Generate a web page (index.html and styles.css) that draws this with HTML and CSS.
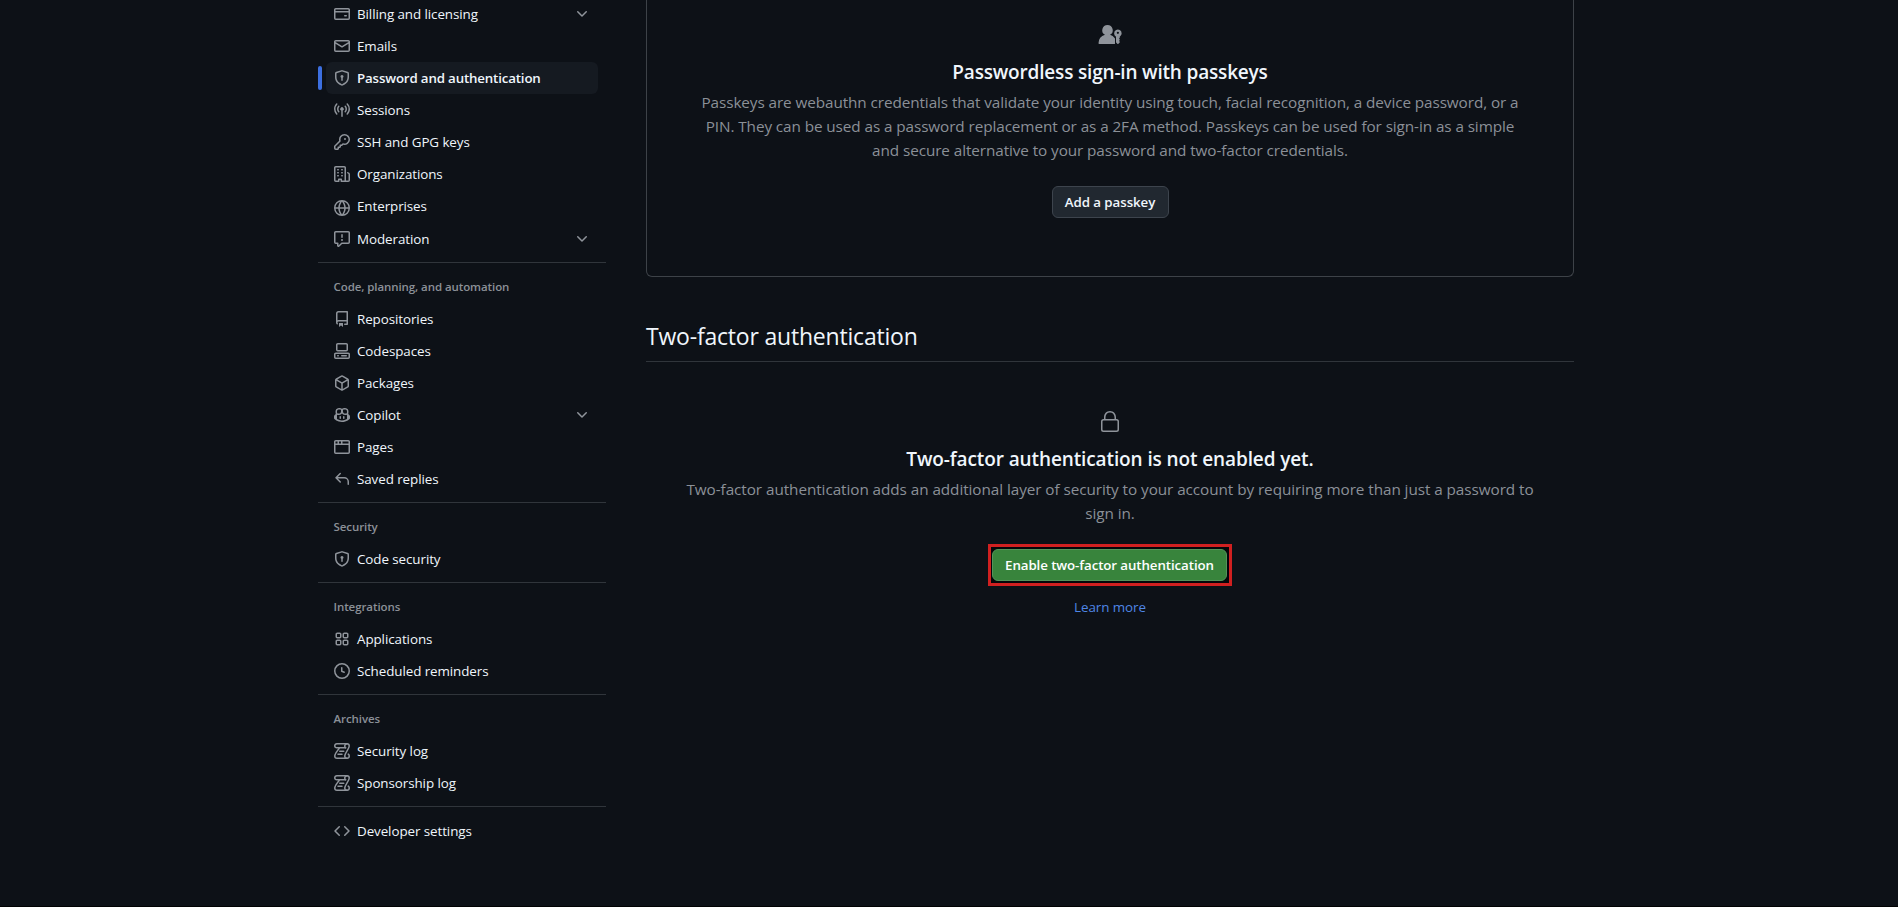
FILE: index.html
```html
<!DOCTYPE html>
<html lang="en">
<head>
    <meta charset="UTF-8">
    <meta name="viewport" content="width=device-width, initial-scale=1.0">
    <title>Password and authentication</title>
    <link rel="stylesheet" href="styles.css">
</head>
<body>
    <!-- shared icons -->
    <svg class="sprite" xmlns="http://www.w3.org/2000/svg">
        <symbol id="chevron" viewBox="0 0 16 16"><path d="M12.78 5.22a.749.749 0 0 1 0 1.06l-4.25 4.25a.749.749 0 0 1-1.06 0L3.22 6.28a.749.749 0 1 1 1.06-1.06L8 8.939l3.72-3.719a.749.749 0 0 1 1.06 0Z"/></symbol>
        <symbol id="shield" viewBox="0 0 16 16"><path d="m8.533.133 5.25 1.68A1.75 1.75 0 0 1 15 3.48V7c0 1.566-.32 3.182-1.303 4.682-.983 1.498-2.585 2.813-5.032 3.855a1.697 1.697 0 0 1-1.33 0c-2.447-1.042-4.049-2.357-5.032-3.855C1.32 10.182 1 8.566 1 7V3.48a1.75 1.75 0 0 1 1.217-1.667l5.25-1.68a1.748 1.748 0 0 1 1.066 0Zm-.61 1.429.001.001-5.25 1.68a.251.251 0 0 0-.174.237V7c0 1.36.275 2.666 1.057 3.859.784 1.194 2.121 2.342 4.366 3.298a.196.196 0 0 0 .154 0c2.245-.957 3.582-2.103 4.366-3.297C13.225 9.666 13.5 8.358 13.5 7V3.48a.25.25 0 0 0-.174-.238l-5.25-1.68a.25.25 0 0 0-.153 0ZM9.5 6.5c0 .536-.287 1.032-.75 1.3v2.45a.75.75 0 0 1-1.5 0V7.8A1.5 1.5 0 1 1 9.5 6.5Z"/></symbol>
        <symbol id="log" viewBox="0 0 16 16">
            <g fill="none" stroke="#8f949b" stroke-width="1.5" stroke-linecap="round">
                <path d="M11.6 4.8H2.7a1.95 1.95 0 0 1-1.95-2A2.05 2.05 0 0 1 2.8.75H13A2.25 2.25 0 0 1 15.25 3c0 2.7-4.5 7.1-4.5 10a2.25 2.25 0 0 0 4.5 0c0-.8-.4-1.4-1-1.85"/>
                <path d="M13 .75A2.25 2.25 0 0 0 10.75 3c0 .8.3 1.4.85 1.8"/>
                <path d="M13 15.25H3A2.25 2.25 0 0 1 .75 13c0-2.6 3.5-5.8 4.6-8.1"/>
                <path d="M5.75 8.25h4M4 11.25h4"/>
            </g>
        </symbol>
    </svg>

    <div class="page">
        <nav class="sidebar">
            <ul class="nav-list">
                <li class="nav-item">
                    <svg class="icon" viewBox="0 0 16 16"><path d="M10.75 9a.75.75 0 0 0 0 1.5h1.5a.75.75 0 0 0 0-1.5h-1.5Z"/><path d="M0 3.75C0 2.784.784 2 1.75 2h12.5c.966 0 1.75.784 1.75 1.75v8.5A1.75 1.75 0 0 1 14.25 14H1.75A1.75 1.75 0 0 1 0 12.25ZM14.5 6.5h-13v5.75c0 .138.112.25.25.25h12.5a.25.25 0 0 0 .25-.25Zm0-2.75a.25.25 0 0 0-.25-.25H1.75a.25.25 0 0 0-.25.25V5h13Z"/></svg>
                    <span class="label">Billing and licensing</span>
                    <svg class="icon"><use href="#chevron"/></svg>
                </li>
                <li class="nav-item">
                    <svg class="icon" viewBox="0 0 16 16"><path d="M1.75 2h12.5c.966 0 1.75.784 1.75 1.75v8.5A1.75 1.75 0 0 1 14.25 14H1.75A1.75 1.75 0 0 1 0 12.25v-8.5C0 2.784.784 2 1.75 2ZM1.5 12.251c0 .138.112.25.25.25h12.5a.25.25 0 0 0 .25-.25V5.809L8.38 9.397a.75.75 0 0 1-.76 0L1.5 5.809v6.442Zm13-8.181v-.32a.25.25 0 0 0-.25-.25H1.75a.25.25 0 0 0-.25.25v.32L8 7.88Z"/></svg>
                    <span class="label">Emails</span>
                </li>
                <li class="nav-item active">
                    <svg class="icon"><use href="#shield"/></svg>
                    <span class="label">Password and authentication</span>
                </li>
                <li class="nav-item">
                    <svg class="icon" viewBox="0 0 16 16"><path d="M8.75 8.582a1.75 1.75 0 1 0-1.5 0v5.668a.75.75 0 0 0 1.5 0Zm3.983-7.125a.75.75 0 0 1 1.06.026A7.976 7.976 0 0 1 16 7c0 2.139-.84 4.083-2.207 5.517a.75.75 0 1 1-1.086-1.034A6.474 6.474 0 0 0 14.5 7a6.474 6.474 0 0 0-1.793-4.483.75.75 0 0 1 .026-1.06Zm-9.466 0c.3.286.312.76.026 1.06A6.474 6.474 0 0 0 1.5 7a6.47 6.47 0 0 0 1.793 4.483.75.75 0 0 1-1.086 1.034A7.973 7.973 0 0 1 0 7c0-2.139.84-4.083 2.207-5.517a.75.75 0 0 1 1.06-.026Zm8.556 2.321A4.988 4.988 0 0 1 13 7a4.988 4.988 0 0 1-1.177 3.222.75.75 0 1 1-1.146-.967A3.487 3.487 0 0 0 11.5 7c0-.86-.309-1.645-.823-2.255a.75.75 0 0 1 1.146-.967Zm-6.492.958A3.48 3.48 0 0 0 4.5 7a3.48 3.48 0 0 0 .823 2.255.75.75 0 0 1-1.146.967A4.981 4.981 0 0 1 3 7a4.982 4.982 0 0 1 1.188-3.236.75.75 0 1 1 1.143.972Z"/></svg>
                    <span class="label">Sessions</span>
                </li>
                <li class="nav-item">
                    <svg class="icon" viewBox="0 0 16 16"><path d="M10.5 0a5.499 5.499 0 1 1-1.288 10.848l-.932.932a.749.749 0 0 1-.53.22H7v.75a.749.749 0 0 1-.22.53l-.5.5a.749.749 0 0 1-.53.22H5v.75a.749.749 0 0 1-.22.53l-.5.5a.749.749 0 0 1-.53.22h-2A1.75 1.75 0 0 1 0 14.25v-2c0-.199.079-.389.22-.53l4.932-4.932A5.5 5.5 0 0 1 10.5 0Zm-4 5.5c-.001.431.069.86.205 1.269a.75.75 0 0 1-.181.768L1.5 12.56v1.69c0 .138.112.25.25.25h1.69l.06-.06v-1.19a.75.75 0 0 1 .75-.75h1.19l.06-.06v-1.19a.75.75 0 0 1 .75-.75h1.19l1.023-1.025a.75.75 0 0 1 .768-.18A4 4 0 1 0 6.5 5.5ZM11 6a1 1 0 1 1 0-2 1 1 0 0 1 0 2Z"/></svg>
                    <span class="label">SSH and GPG keys</span>
                </li>
                <li class="nav-item">
                    <svg class="icon" viewBox="0 0 16 16"><path d="M1.75 16A1.75 1.75 0 0 1 0 14.25V1.75C0 .784.784 0 1.75 0h8.5C11.216 0 12 .784 12 1.75v12.5c0 .085-.006.168-.018.25h2.268a.25.25 0 0 0 .25-.25V8.285a.25.25 0 0 0-.111-.208l-1.055-.703a.749.749 0 1 1 .832-1.248l1.055.703c.487.325.779.871.779 1.456v5.965A1.75 1.75 0 0 1 14.25 16h-3.5a.766.766 0 0 1-.197-.026c-.099.017-.2.026-.303.026h-3a.75.75 0 0 1-.75-.75V14h-1v1.25a.75.75 0 0 1-.75.75Zm-.25-1.75c0 .138.112.25.25.25H4v-1.25a.75.75 0 0 1 .75-.75h2.5a.75.75 0 0 1 .75.75v1.25h2.25a.25.25 0 0 0 .25-.25V1.75a.25.25 0 0 0-.25-.25h-8.5a.25.25 0 0 0-.25.25ZM3.75 6h.5a.75.75 0 0 1 0 1.5h-.5a.75.75 0 0 1 0-1.5ZM3 3.75A.75.75 0 0 1 3.75 3h.5a.75.75 0 0 1 0 1.5h-.5A.75.75 0 0 1 3 3.75Zm4 3A.75.75 0 0 1 7.75 6h.5a.75.75 0 0 1 0 1.5h-.5A.75.75 0 0 1 7 6.75ZM7.75 3h.5a.75.75 0 0 1 0 1.5h-.5a.75.75 0 0 1 0-1.5ZM3 9.75A.75.75 0 0 1 3.75 9h.5a.75.75 0 0 1 0 1.5h-.5A.75.75 0 0 1 3 9.75ZM7.75 9h.5a.75.75 0 0 1 0 1.5h-.5a.75.75 0 0 1 0-1.5Z"/></svg>
                    <span class="label">Organizations</span>
                </li>
                <li class="nav-item enterprises">
                    <svg class="icon" viewBox="0 0 16 16"><path d="M8 0a8 8 0 1 1 0 16A8 8 0 0 1 8 0ZM5.78 8.75a9.64 9.64 0 0 0 1.363 4.177c.255.426.542.832.857 1.215.245-.296.551-.705.857-1.215A9.64 9.64 0 0 0 10.22 8.75Zm4.44-1.5a9.64 9.64 0 0 0-1.363-4.177c-.307-.51-.612-.919-.857-1.215a9.927 9.927 0 0 0-.857 1.215A9.64 9.64 0 0 0 5.78 7.25Zm-5.944 1.5H1.543a6.507 6.507 0 0 0 4.666 5.5c-.123-.181-.24-.365-.352-.552-.715-1.192-1.437-2.874-1.581-4.948Zm-2.733-1.5h2.733c.144-2.074.866-3.756 1.58-4.948.12-.197.237-.381.353-.552a6.507 6.507 0 0 0-4.666 5.5Zm10.181 1.5c-.144 2.074-.866 3.756-1.58 4.948-.12.197-.237.381-.353.552a6.507 6.507 0 0 0 4.666-5.5Zm2.733-1.5a6.507 6.507 0 0 0-4.666-5.5c.123.181.24.365.353.552.714 1.192 1.436 2.874 1.58 4.948Z"/></svg>
                    <span class="label">Enterprises</span>
                </li>
                <li class="nav-item">
                    <svg class="icon" viewBox="0 0 16 16"><path d="M0 1.75C0 .784.784 0 1.75 0h12.5C15.216 0 16 .784 16 1.75v9.5A1.75 1.75 0 0 1 14.25 13H8.06l-2.573 2.573A1.458 1.458 0 0 1 3 14.543V13H1.75A1.75 1.75 0 0 1 0 11.25Zm1.75-.25a.25.25 0 0 0-.25.25v9.5c0 .138.112.25.25.25h2a.75.75 0 0 1 .75.75v2.19l2.72-2.72a.749.749 0 0 1 .53-.22h6.5a.25.25 0 0 0 .25-.25v-9.5a.25.25 0 0 0-.25-.25Zm7 2.25v2.5a.75.75 0 0 1-1.5 0v-2.5a.75.75 0 0 1 1.5 0ZM9 9a1 1 0 1 1-2 0 1 1 0 0 1 2 0Z"/></svg>
                    <span class="label">Moderation</span>
                    <svg class="icon"><use href="#chevron"/></svg>
                </li>
            </ul>
            <h3 class="nav-title">Code, planning, and automation</h3>
            <ul class="nav-list">
                <li class="nav-item">
                    <svg class="icon" viewBox="0 0 16 16"><path d="M2 2.5A2.5 2.5 0 0 1 4.5 0h8.75a.75.75 0 0 1 .75.75v12.5a.75.75 0 0 1-.75.75h-2.5a.75.75 0 0 1 0-1.5h1.75v-2h-8a1 1 0 0 0-.714 1.7.75.75 0 1 1-1.072 1.05A2.495 2.495 0 0 1 2 11.5Zm10.5-1h-8a1 1 0 0 0-1 1v6.708A2.486 2.486 0 0 1 4.5 9h8ZM5 12.25a.25.25 0 0 1 .25-.25h3.5a.25.25 0 0 1 .25.25v3.25a.25.25 0 0 1-.4.2l-1.45-1.087a.249.249 0 0 0-.3 0L5.4 15.7a.25.25 0 0 1-.4-.2Z"/></svg>
                    <span class="label">Repositories</span>
                </li>
                <li class="nav-item">
                    <svg class="icon" viewBox="0 0 16 16"><path d="M0 11.25c0-.966.784-1.75 1.75-1.75h12.5c.966 0 1.75.784 1.75 1.75v3A1.75 1.75 0 0 1 14.25 16H1.75A1.75 1.75 0 0 1 0 14.25Zm2-9.5C2 .784 2.784 0 3.75 0h8.5C13.216 0 14 .784 14 1.75v5a1.75 1.75 0 0 1-1.75 1.75h-8.5A1.75 1.75 0 0 1 2 6.75Zm1.75-.25a.25.25 0 0 0-.25.25v5c0 .138.112.25.25.25h8.5a.25.25 0 0 0 .25-.25v-5a.25.25 0 0 0-.25-.25Zm-2 9.5a.25.25 0 0 0-.25.25v3c0 .138.112.25.25.25h12.5a.25.25 0 0 0 .25-.25v-3a.25.25 0 0 0-.25-.25Z"/><path d="M7 12.75a.75.75 0 0 1 .75-.75h4.5a.75.75 0 0 1 0 1.5h-4.5a.75.75 0 0 1-.75-.75Zm-4 0a.75.75 0 0 1 .75-.75h.5a.75.75 0 0 1 0 1.5h-.5a.75.75 0 0 1-.75-.75Z"/></svg>
                    <span class="label">Codespaces</span>
                </li>
                <li class="nav-item">
                    <svg class="icon" viewBox="0 0 16 16"><path d="m8.878.392 5.25 3.045c.54.314.872.89.872 1.514v6.098a1.75 1.75 0 0 1-.872 1.514l-5.25 3.045a1.75 1.75 0 0 1-1.756 0l-5.25-3.045A1.75 1.75 0 0 1 1 11.049V4.951c0-.624.332-1.201.872-1.514L7.122.392a1.75 1.75 0 0 1 1.756 0ZM7.875 1.69l-4.63 2.685L8 7.133l4.755-2.758-4.63-2.685a.248.248 0 0 0-.25 0ZM2.5 5.677v5.372c0 .09.047.171.125.216l4.625 2.683V8.432Zm6.25 8.271 4.625-2.683a.25.25 0 0 0 .125-.216V5.677L8.75 8.432Z"/></svg>
                    <span class="label">Packages</span>
                </li>
                <li class="nav-item">
                    <svg class="icon" viewBox="0 0 16 16"><path d="M7.998 15.035c-4.562 0-7.873-2.914-7.998-3.749V9.338c.085-.628.677-1.686 1.588-2.065.013-.07.024-.143.036-.218.029-.183.06-.384.126-.612-.201-.508-.254-1.084-.254-1.656 0-.87.128-1.769.693-2.484.579-.733 1.494-1.124 2.724-1.261 1.206-.134 2.262.034 2.944.765.05.053.096.108.139.165.044-.057.094-.112.143-.165.682-.731 1.738-.899 2.944-.765 1.23.137 2.145.528 2.724 1.261.566.715.693 1.614.693 2.484 0 .572-.053 1.148-.254 1.656.066.228.098.429.126.612.012.076.024.148.037.218.924.385 1.522 1.471 1.591 2.095v1.872c0 .766-3.351 3.795-8.002 3.795Zm0-1.485c2.28 0 4.584-1.11 5.002-1.433V7.862l-.023-.116c-.49.21-1.075.291-1.727.291-1.146 0-2.059-.327-2.71-.991A3.222 3.222 0 0 1 8 6.303a3.24 3.24 0 0 1-.544.743c-.65.664-1.563.991-2.71.991-.652 0-1.236-.081-1.727-.291l-.023.116v4.255c.419.323 2.722 1.433 5.002 1.433ZM6.762 2.83c-.193-.206-.637-.413-1.682-.297-1.019.113-1.479.404-1.713.7-.247.312-.369.789-.369 1.554 0 .793.129 1.171.308 1.371.162.181.519.379 1.442.379.853 0 1.339-.235 1.638-.54.315-.322.527-.827.617-1.553.117-.935-.037-1.395-.241-1.614Zm4.155-.297c-1.044-.116-1.488.091-1.681.297-.204.219-.359.679-.242 1.614.091.726.303 1.231.618 1.553.299.305.784.54 1.638.54.922 0 1.28-.198 1.442-.379.179-.2.308-.578.308-1.371 0-.765-.123-1.242-.37-1.554-.233-.296-.693-.587-1.713-.7Z"/><path d="M6.25 9.037a.75.75 0 0 1 .75.75v1.501a.75.75 0 0 1-1.5 0V9.787a.75.75 0 0 1 .75-.75Zm4.25.75v1.501a.75.75 0 0 1-1.5 0V9.787a.75.75 0 0 1 1.5 0Z"/></svg>
                    <span class="label">Copilot</span>
                    <svg class="icon"><use href="#chevron"/></svg>
                </li>
                <li class="nav-item">
                    <svg class="icon" viewBox="0 0 16 16"><path d="M0 2.75C0 1.784.784 1 1.75 1h12.5c.966 0 1.75.784 1.75 1.75v10.5A1.75 1.75 0 0 1 14.25 15H1.75A1.75 1.75 0 0 1 0 13.25ZM14.5 6h-13v7.25c0 .138.112.25.25.25h12.5a.25.25 0 0 0 .25-.25Zm-6-3.5v2h6V2.75a.25.25 0 0 0-.25-.25ZM5 2.5v2h2v-2Zm-3.25 0a.25.25 0 0 0-.25.25V4.5h2v-2Z"/></svg>
                    <span class="label">Pages</span>
                </li>
                <li class="nav-item">
                    <svg class="icon" viewBox="0 0 16 16"><path d="M6.78 1.97a.75.75 0 0 1 0 1.06L3.81 6h6.44A4.75 4.75 0 0 1 15 10.75v2.5a.75.75 0 0 1-1.5 0v-2.5a3.25 3.25 0 0 0-3.25-3.25H3.81l2.97 2.97a.749.749 0 1 1-1.06 1.06L1.47 7.28a.75.75 0 0 1 0-1.06l4.25-4.25a.75.75 0 0 1 1.06 0Z"/></svg>
                    <span class="label">Saved replies</span>
                </li>
            </ul>
            <h3 class="nav-title">Security</h3>
            <ul class="nav-list">
                <li class="nav-item">
                    <svg class="icon"><use href="#shield"/></svg>
                    <span class="label">Code security</span>
                </li>
            </ul>
            <h3 class="nav-title">Integrations</h3>
            <ul class="nav-list">
                <li class="nav-item">
                    <svg class="icon" viewBox="0 0 16 16"><path d="M1.5 3.25c0-.966.784-1.75 1.75-1.75h2.5c.966 0 1.75.784 1.75 1.75v2.5A1.75 1.75 0 0 1 5.75 7.5h-2.5A1.75 1.75 0 0 1 1.5 5.75Zm7 0c0-.966.784-1.75 1.75-1.75h2.5c.966 0 1.75.784 1.75 1.75v2.5a1.75 1.75 0 0 1-1.75 1.75h-2.5A1.75 1.75 0 0 1 8.5 5.75Zm-7 7c0-.966.784-1.75 1.75-1.75h2.5c.966 0 1.75.784 1.75 1.75v2.5a1.75 1.75 0 0 1-1.75 1.75h-2.5a1.75 1.75 0 0 1-1.75-1.75Zm7 0c0-.966.784-1.75 1.75-1.75h2.5c.966 0 1.75.784 1.75 1.75v2.5a1.75 1.75 0 0 1-1.75 1.75h-2.5a1.75 1.75 0 0 1-1.75-1.75ZM3.25 3a.25.25 0 0 0-.25.25v2.5c0 .138.112.25.25.25h2.5A.25.25 0 0 0 6 5.75v-2.5A.25.25 0 0 0 5.75 3Zm7 0a.25.25 0 0 0-.25.25v2.5c0 .138.112.25.25.25h2.5a.25.25 0 0 0 .25-.25v-2.5a.25.25 0 0 0-.25-.25Zm-7 7a.25.25 0 0 0-.25.25v2.5c0 .138.112.25.25.25h2.5a.25.25 0 0 0 .25-.25v-2.5a.25.25 0 0 0-.25-.25Zm7 0a.25.25 0 0 0-.25.25v2.5c0 .138.112.25.25.25h2.5a.25.25 0 0 0 .25-.25v-2.5a.25.25 0 0 0-.25-.25Z"/></svg>
                    <span class="label">Applications</span>
                </li>
                <li class="nav-item">
                    <svg class="icon" viewBox="0 0 16 16"><path d="M8 0a8 8 0 1 1 0 16A8 8 0 0 1 8 0ZM1.5 8a6.5 6.5 0 1 0 13 0 6.5 6.5 0 0 0-13 0Zm7-3.25v2.992l2.028.812a.75.75 0 0 1-.557 1.392l-2.5-1A.751.751 0 0 1 7 8.25v-3.5a.75.75 0 0 1 1.5 0Z"/></svg>
                    <span class="label">Scheduled reminders</span>
                </li>
            </ul>
            <h3 class="nav-title">Archives</h3>
            <ul class="nav-list">
                <li class="nav-item">
                    <svg class="icon"><use href="#log"/></svg>
                    <span class="label">Security log</span>
                </li>
                <li class="nav-item">
                    <svg class="icon"><use href="#log"/></svg>
                    <span class="label">Sponsorship log</span>
                </li>
            </ul>
            <ul class="nav-list developer">
                <li class="nav-item">
                    <svg class="icon" viewBox="0 0 16 16"><path d="m11.28 3.22 4.25 4.25a.75.75 0 0 1 0 1.06l-4.25 4.25a.749.749 0 1 1-1.06-1.06L13.94 8l-3.72-3.72a.749.749 0 1 1 1.06-1.06Zm-6.56 0a.749.749 0 1 1 1.06 1.06L2.06 8l3.72 3.72a.749.749 0 1 1-1.06 1.06L.47 8.53a.75.75 0 0 1 0-1.06Z"/></svg>
                    <span class="label">Developer settings</span>
                </li>
            </ul>
        </nav>

        <main class="content">
            <section class="blankslate passkeys">
                <svg class="big-icon" viewBox="0 0 24 24"><path d="M9.496 2a5.25 5.25 0 0 0-2.519 9.857A9.006 9.006 0 0 0 .5 20.228a.751.751 0 0 0 .728.772h15.272a.5.5 0 0 0 .5-.5v-4.669a.95.95 0 0 0-.171-.551 9.02 9.02 0 0 0-4.814-3.423A5.25 5.25 0 0 0 9.496 2Z"/><path d="M23.625 10.313c0 1.31-.672 2.464-1.691 3.134a.398.398 0 0 0-.184.33v.886a.372.372 0 0 1-.11.265l-.534.534a.188.188 0 0 0 0 .265l.534.534c.071.07.11.166.11.265v.347a.374.374 0 0 1-.11.265l-.534.534a.188.188 0 0 0 0 .265l.534.534a.37.37 0 0 1 .11.265v.431a.379.379 0 0 1-.097.253l-1.2 1.319a.781.781 0 0 1-1.156 0l-1.2-1.319a.379.379 0 0 1-.097-.253v-5.39a.398.398 0 0 0-.184-.33 3.75 3.75 0 1 1 5.809-3.134ZM21 9.75a1.125 1.125 0 1 0-2.25 0 1.125 1.125 0 0 0 2.25 0Z"/></svg>
                <h3>Passwordless sign-in with passkeys</h3>
                <p>Passkeys are webauthn credentials that validate your identity using touch, facial recognition, a device password, or a PIN. They can be used as a password replacement or as a 2FA method. Passkeys can be used for sign-in as a simple and secure alternative to your password and two-factor credentials.</p>
                <button class="btn">Add a passkey</button>
            </section>

            <h2 class="subhead">Two-factor authentication</h2>

            <section class="blankslate two-factor">
                <svg class="big-icon" viewBox="0 0 24 24"><path d="M6 9V7.25C6 3.845 8.503 1 12 1s6 2.845 6 6.25V9h.5a2.5 2.5 0 0 1 2.5 2.5v8a2.5 2.5 0 0 1-2.5 2.5h-13A2.5 2.5 0 0 1 3 19.5v-8A2.5 2.5 0 0 1 5.5 9Zm-1.5 2.5v8a1 1 0 0 0 1 1h13a1 1 0 0 0 1-1v-8a1 1 0 0 0-1-1h-13a1 1 0 0 0-1 1Zm3-4.25V9h9V7.25c0-2.67-1.922-4.75-4.5-4.75-2.578 0-4.5 2.08-4.5 4.75Z"/></svg>
                <h3>Two-factor authentication is not enabled yet.</h3>
                <p>Two-factor authentication adds an additional layer of security to your account by requiring more than just a password to sign in.</p>
                <div class="highlight">
                    <button class="btn btn-primary">Enable two-factor authentication</button>
                </div>
                <a class="learn-more">Learn more</a>
            </section>
        </main>
    </div>
</body>
</html>
```
FILE: styles.css
```css
* {
    box-sizing: border-box;
}
body {
    margin: 0;
    height: 907px;
    overflow: hidden;
    background: #0d1117;
    border-bottom: 1px solid #010203;
    color: #f0f6fc;
    font-family: 'Open Sans', 'Noto Sans', sans-serif;
    font-size: 13.4px;
    letter-spacing: -0.08px;
}
h2, h3, p, ul {
    margin: 0;
    padding: 0;
}
.sprite {
    display: none;
}
.page {
    display: flex;
    gap: 40px;
    width: 1256px;
    margin-left: 318px;
}

/* sidebar */
.sidebar {
    width: 288px;
    margin-top: -2px;
}
.nav-list {
    list-style: none;
    padding: 0 8px 7px;
}
.nav-item {
    position: relative;
    display: flex;
    align-items: center;
    gap: 7px;
    height: 32px;
    padding: 0 8px;
    border-radius: 6px;
    line-height: 20px;
}
.nav-item .label {
    flex: 1;
    padding-bottom: 1px;
}
.nav-item.active {
    background: #151a21;
    font-size: 13.3px;
    font-weight: 600;
    letter-spacing: -0.16px;
}
.nav-item.active::before {
    content: "";
    position: absolute;
    left: -8px;
    top: 4px;
    width: 4px;
    height: 24px;
    border-radius: 6px;
    background: #3c6fe0;
}
.nav-item.enterprises {
    height: 33px;
}
.enterprises .icon {
    margin-top: 3px;
}
.nav-item.enterprises .label {
    padding-bottom: 2px;
}
.icon {
    width: 16px;
    height: 16px;
    fill: #8f949b;
}
.nav-title {
    height: 41px;
    padding: 8px 15.5px 0;
    border-top: 1px solid #30353b;
    color: #8b9097;
    font-size: 11.5px;
    font-weight: 600;
    line-height: 31px;
    letter-spacing: -0.08px;
}
.developer {
    border-top: 1px solid #30353b;
    padding-top: 8px;
}

/* main column */
.content {
    width: 928px;
}
.blankslate {
    display: flex;
    flex-direction: column;
    align-items: center;
    padding: 0 32px;
    text-align: center;
}
.blankslate h3 {
    font-size: 19px;
    font-weight: 600;
    line-height: 30px;
    letter-spacing: -0.18px;
}
.blankslate p {
    color: #8b9097;
    font-size: 15.3px;
    line-height: 24px;
    letter-spacing: -0.09px;
}
.big-icon {
    width: 24px;
    height: 24px;
    fill: #8f949b;
}
.passkeys {
    height: 277px;
    padding: 23px 47px 0;
    border: 1px solid #3d4248;
    border-top: 0;
    border-radius: 0 0 6px 6px;
}
.passkeys h3 {
    margin: 10px 0 3px;
}
.passkeys .btn {
    width: 117px;
    margin-top: 24px;
}
.btn {
    height: 32px;
    padding: 0 0 1px;
    border: 1px solid #3d444d;
    border-radius: 6px;
    background: #212830;
    color: #f0f6fc;
    font-family: inherit;
    font-size: 13.3px;
    font-weight: 600;
    line-height: 20px;
    letter-spacing: -0.06px;
}
.subhead {
    height: 38px;
    margin-top: 47px;
    border-bottom: 1px solid #30353b;
    font-size: 23px;
    font-weight: 400;
    line-height: 24px;
    letter-spacing: -0.2px;
}
.two-factor {
    padding-top: 48px;
}
.two-factor h3 {
    margin: 10px 0 3px;
    letter-spacing: -0.11px;
}
.two-factor p {
    letter-spacing: -0.07px;
}
.highlight {
    display: flex;
    margin-top: 19px;
    padding: 2px 2px 2px 1px;
    border: 3px solid #d02020;
    background: #05070a;
}
.btn-primary {
    width: 235px;
    border-color: #55935a;
    background: #38843c;
    color: #fff;
    letter-spacing: -0.09px;
}
.learn-more {
    margin-top: 11px;
    color: #4f86e6;
    line-height: 20px;
}
```
